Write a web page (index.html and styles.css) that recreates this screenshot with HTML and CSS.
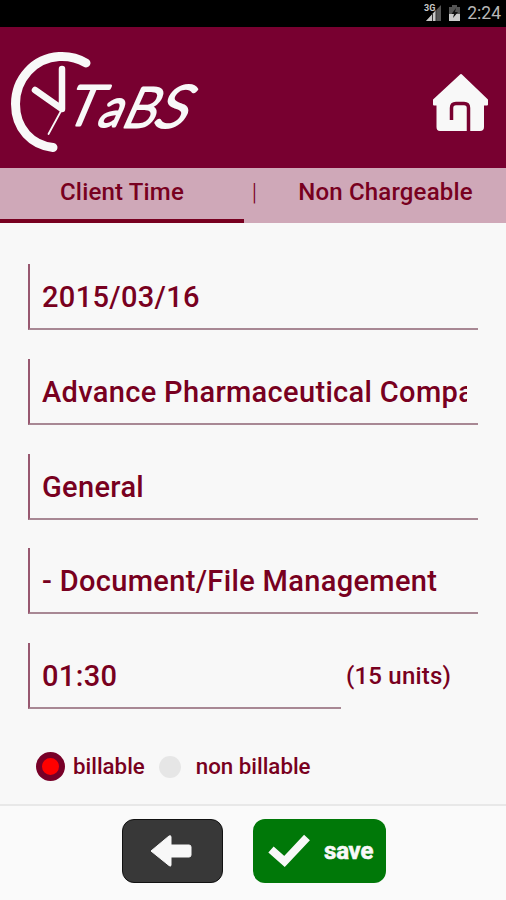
FILE: index.html
```html
<!DOCTYPE html>
<html lang="en">
<head>
  <meta charset="UTF-8">
  <title>TaBS - Client Time</title>
  <link rel="stylesheet" href="styles.css">
</head>
<body>
  <div class="status-bar">
    <svg class="signal" width="18" height="18" viewBox="0 0 18 18">
      <path d="M2 17L17 1V17Z" fill="#555"/>
      <path d="M2 17L12 6V17Z" fill="#c8c8c8"/>
      <path d="M8.500 9V17M12 6V17" stroke="#333" stroke-width="1"/>
      <text class="network" x="0" y="7">3G</text>
    </svg>
    <svg class="battery" width="13" height="18" viewBox="0 0 13 18">
      <path d="M4 1H9V3H12V17H1V3H4Z" fill="#555"/>
      <path d="M1 10H12V17H1Z" fill="#ccc"/>
      <path d="M8 4L3.500 10H6L5 14L10 8H7Z" fill="#111"/>
    </svg>
    <span class="clock">2:24</span>
  </div>

  <header class="header">
    <svg class="logo" width="240" height="120" viewBox="0 0 240 120">
      <g fill="none" stroke="#f8f8f8" stroke-linecap="round">
        <path d="M86 25C77 19.500 68 18 59 18.500C34 20 15.500 41 15.500 66C15.500 91 32 107 53 109.500" stroke-width="9"/>
        <path d="M62 31V71L35 52" stroke-width="6.500" stroke-linejoin="round"/>
        <path d="M61 73L48.500 96" stroke-width="1.800"/>
      </g>
      <g class="logo-text">
        <text transform="translate(78.500 86.500) skewX(-23) scale(1 .98)">T</text>
        <text class="small" transform="translate(107 87.500) skewX(-24) scale(.9 1)">a</text>
        <text transform="translate(136 88.500) skewX(-24) scale(.92 .98)">B</text>
        <text transform="translate(167 88.500) skewX(-26) scale(1.050 1.030)">S</text>
      </g>
    </svg>
    <svg class="home" width="58" height="60" viewBox="0 0 58 60">
      <path d="M29 3L55 28V32.500H51V55Q51 58 48 58H8Q5.500 58 5.500 55V32.500H2V28Z" fill="#f8f8f8" stroke="#f8f8f8" stroke-width="2" stroke-linejoin="round"/>
      <path d="M19.500 48V36Q19.500 31.500 24 31.500H32Q36.500 31.500 36.500 36V60" fill="none" stroke="#780030" stroke-width="3.500"/>
    </svg>
  </header>

  <nav class="tabs">
    <div class="tab active">Client Time</div>
    <div class="separator">|</div>
    <div class="tab">Non Chargeable</div>
  </nav>

  <main class="form">
    <div class="field"><div class="value">2015/03/16</div></div>
    <div class="field"><div class="value">Advance Pharmaceutical Compa</div></div>
    <div class="field"><div class="value">General</div></div>
    <div class="field"><div class="value">- Document/File Management</div></div>
    <div class="time-row">
      <div class="field time"><div class="value">01:30</div></div>
      <span class="units">(15 units)</span>
    </div>
    <div class="options">
      <span class="radio checked"></span>
      <span class="billable">billable</span>
      <span class="radio"></span>
      <span class="non-billable">non billable</span>
    </div>
  </main>

  <footer class="footer">
    <button class="button back">
      <svg width="44" height="34" viewBox="0 0 44 34">
        <path d="M2 17L20 2Q22 1 22 3V11H40Q42 11 42 13V21Q42 23 40 23H22V31Q22 33 20 31.500Z" fill="#f8f8f8" stroke="#f8f8f8" stroke-linejoin="round"/>
      </svg>
    </button>
    <button class="button save">
      <svg width="43" height="34" viewBox="0 0 43 34">
        <path d="M3 15.500L16.500 27.500L39 3.500" fill="none" stroke="#f8f8f8" stroke-width="8"/>
      </svg>
      <span>save</span>
    </button>
  </footer>
</body>
</html>
```
FILE: styles.css
```css
* {
  box-sizing: border-box;
}

body {
  margin: 0;
  height: 900px;
  display: flex;
  flex-direction: column;
  overflow: hidden;
  background: #f8f8f8;
  color: #780020;
  font-family: Roboto, sans-serif;
  font-weight: 500;
}

.status-bar {
  height: 27px;
  background: #000;
  display: flex;
  justify-content: flex-end;
  align-items: center;
  padding: 0 5px 2px 0;
  color: #b8b8b8;
}
.signal {
  margin-right: 6px;
  overflow: visible;
}
.network {
  font-size: 9px;
  font-weight: bold;
  fill: #c8c8c8;
}
.battery {
  margin-right: 6px;
}
.clock {
  font-size: 17.5px;
  line-height: 27px;
  padding-top: 2px;
  font-weight: 400;
}

.header {
  height: 140.5px;
  background: #780030;
  display: flex;
  justify-content: space-between;
  padding: 11px 16px 0 0;
}
.home {
  margin-top: 34px;
}
.logo-text {
  font-family: Lato, sans-serif;
  font-size: 56px;
  font-weight: 300;
  text-anchor: middle;
  fill: #f8f8f8;
  stroke: #f8f8f8;
  stroke-width: 3.2px;
  stroke-linejoin: round;
}
.logo-text .small {
  font-size: 52px;
}

.tabs {
  height: 55.5px;
  display: flex;
  background: #cfa8b8;
  font-size: 24px;
  line-height: 48px;
  letter-spacing: 0.18px;
  text-align: center;
}
.tab {
  flex: 1;
}
.tab.active {
  border-bottom: 4.5px solid #780020;
  flex: 0 0 244px;
  height: 55px;
}
.separator {
  width: 21px;
  font-weight: 300;
}

.form {
  height: 581px;
  padding: 41px 28px 0;
  display: flex;
  flex-direction: column;
  gap: 28.8px;
}
.field {
  height: 66px;
  flex-shrink: 0;
  border-left: 2px solid #985870;
  border-bottom: 2px solid #a88894;
  padding: 0 11px 0 12px;
}
.value {
  overflow: hidden;
  white-space: nowrap;
  font-size: 29px;
  line-height: 66px;
  letter-spacing: 0.34px;
}
.time-row {
  display: flex;
}
.time {
  width: 313px;
}
.units {
  margin-left: 5px;
  font-size: 24px;
  line-height: 66px;
  letter-spacing: 0.2px;
}
.options {
  display: flex;
  align-items: center;
  height: 58px;
  padding-left: 8px;
  font-size: 22.3px;
  line-height: 24px;
}
.billable,
.non-billable {
  padding-bottom: 1px;
}
.radio {
  width: 22px;
  height: 22px;
  border-radius: 50%;
  background: #e6e6e6;
}
.radio.checked {
  width: 29px;
  height: 29px;
  background: #f00;
  border: 6.5px solid #780028;
}
.billable {
  margin: 0 14px 0 8px;
}
.non-billable {
  margin-left: 15px;
}

.footer {
  flex: 1;
  border-top: 2px solid #e8e8e8;
  background: #fafafa;
  display: flex;
  gap: 30px;
  padding: 13px 0 0 122px;
}
.button {
  height: 64px;
  padding: 0;
  border: none;
  border-radius: 12px;
  display: flex;
  align-items: center;
  color: #f8f8f8;
  font: bold 24px Roboto, sans-serif;
}
.back {
  width: 101px;
  padding-right: 3px;
  justify-content: center;
  background: #383838;
  border: 1.5px solid #111;
}
.save {
  width: 133px;
  padding-left: 15px;
  gap: 13px;
  background: #007808;
}
.save span {
  letter-spacing: -0.2px;
  -webkit-text-stroke: 0.6px #f8f8f8;
}
```
